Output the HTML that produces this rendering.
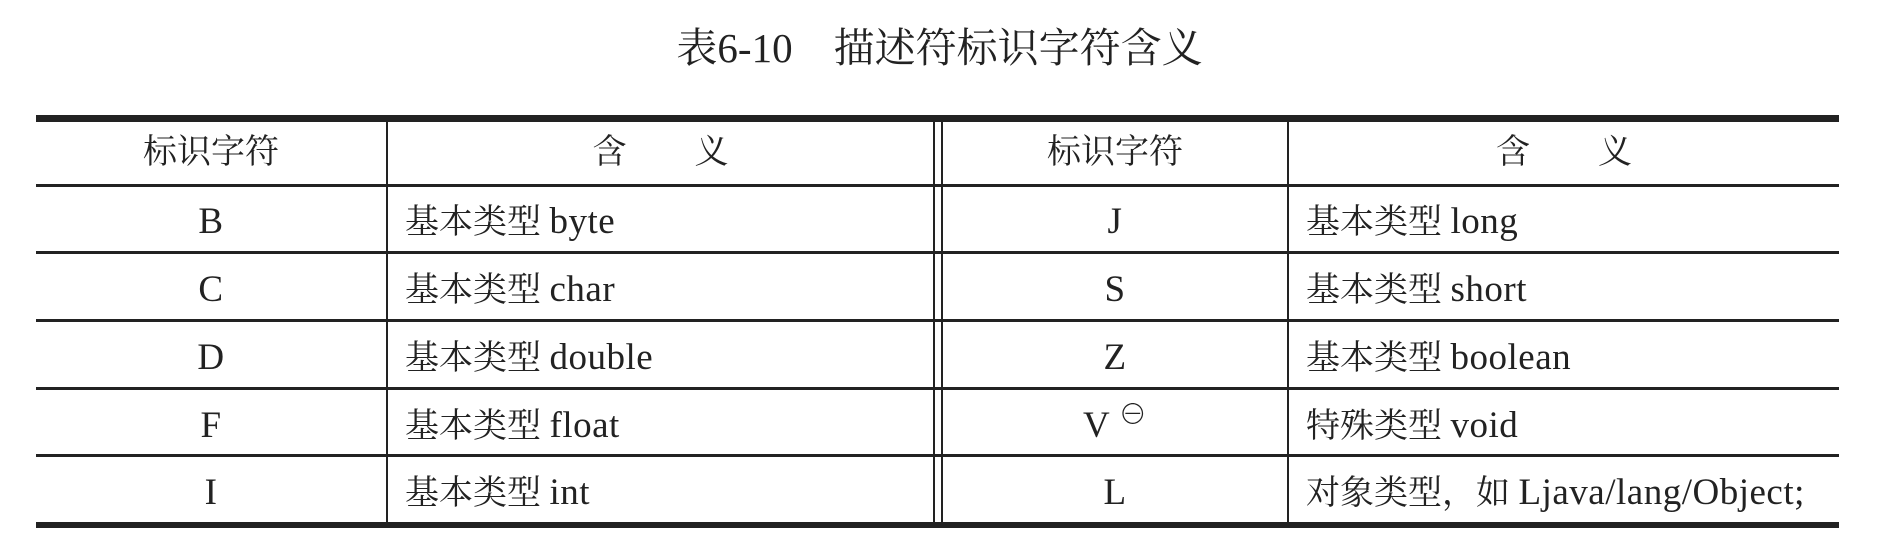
<!DOCTYPE html>
<html><head><meta charset="utf-8"><style>
body{margin:0;width:1879px;height:555px;background:#fff;position:relative;overflow:hidden;font-family:"Liberation Serif","Noto Serif CJK SC",serif;color:#222}
.h{position:absolute;background:#222}
.t{position:absolute;font-size:34px;line-height:38px;white-space:nowrap}
.c{text-align:center}
.l{font-size:37px;letter-spacing:0.5px}
</style></head><body>
<div class="t c" style="left:0;width:1879px;top:25px;font-size:41px;line-height:46px">表6-10&nbsp;&nbsp;&nbsp;&nbsp;描述符标识字符含义</div>
<div class="h" style="left:36px;width:1803px;top:115px;height:7px"></div>
<div class="h" style="left:36px;width:1803px;top:184px;height:3px"></div>
<div class="h" style="left:36px;width:1803px;top:251px;height:3px"></div>
<div class="h" style="left:36px;width:1803px;top:319px;height:3px"></div>
<div class="h" style="left:36px;width:1803px;top:387px;height:3px"></div>
<div class="h" style="left:36px;width:1803px;top:454px;height:3px"></div>
<div class="h" style="left:36px;width:1803px;top:522px;height:6px"></div>
<div class="h" style="left:386px;width:2px;top:120px;height:405px"></div>
<div class="h" style="left:933px;width:2px;top:120px;height:405px"></div>
<div class="h" style="left:941px;width:2px;top:120px;height:405px"></div>
<div class="h" style="left:1287px;width:2px;top:120px;height:405px"></div>
<div class="t c" style="left:36px;width:350px;top:134px">标识字符</div>
<div class="t c" style="left:388px;width:545px;top:134px">含&nbsp;&nbsp;&nbsp;&nbsp;&nbsp;&nbsp;&nbsp;&nbsp;义</div>
<div class="t c" style="left:943px;width:344px;top:134px">标识字符</div>
<div class="t c" style="left:1289px;width:550px;top:134px">含&nbsp;&nbsp;&nbsp;&nbsp;&nbsp;&nbsp;&nbsp;&nbsp;义</div>

<div class="t c" style="left:36px;width:350px;top:203px"><span class="l">B</span></div>
<div class="t" style="left:405px;top:203px">基本类型 <span class="l">byte</span></div>
<div class="t c" style="left:943px;width:344px;top:203px"><span class="l">J</span></div>
<div class="t" style="left:1306px;top:203px">基本类型 <span class="l">long</span></div>

<div class="t c" style="left:36px;width:350px;top:271px"><span class="l">C</span></div>
<div class="t" style="left:405px;top:271px">基本类型 <span class="l">char</span></div>
<div class="t c" style="left:943px;width:344px;top:271px"><span class="l">S</span></div>
<div class="t" style="left:1306px;top:271px">基本类型 <span class="l">short</span></div>

<div class="t c" style="left:36px;width:350px;top:339px"><span class="l">D</span></div>
<div class="t" style="left:405px;top:339px">基本类型 <span class="l">double</span></div>
<div class="t c" style="left:943px;width:344px;top:339px"><span class="l">Z</span></div>
<div class="t" style="left:1306px;top:339px">基本类型 <span class="l">boolean</span></div>

<div class="t c" style="left:36px;width:350px;top:407px"><span class="l">F</span></div>
<div class="t" style="left:405px;top:407px">基本类型 <span class="l">float</span></div>
<div class="t" style="left:1083px;top:407px"><span class="l">V</span> <span style="position:relative;top:-13px;font-size:28px">⊖</span></div>
<div class="t" style="left:1306px;top:407px">特殊类型 <span class="l">void</span></div>

<div class="t c" style="left:36px;width:350px;top:474px"><span class="l">I</span></div>
<div class="t" style="left:405px;top:474px">基本类型 <span class="l">int</span></div>
<div class="t c" style="left:943px;width:344px;top:474px"><span class="l">L</span></div>
<div class="t" style="left:1306px;top:474px">对象类型，如 <span class="l">Ljava/lang/Object;</span></div>
</body></html>
